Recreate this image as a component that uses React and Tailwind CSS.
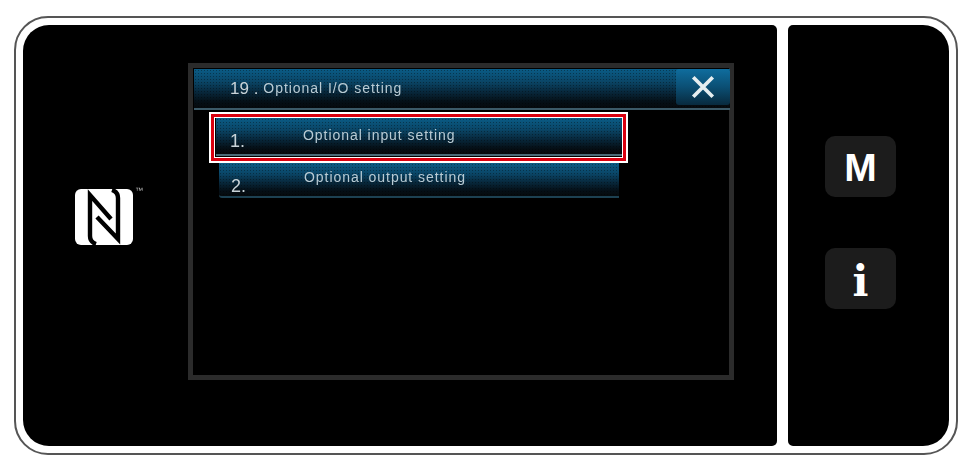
const barGradient = 'bg-[radial-gradient(circle,#00000059_0.7px,transparent_0.9px),linear-gradient(180deg,#0a5c86_0%,#0a4667_32%,#082c42_55%,#050f16_84%,#060a0d_100%)] bg-[length:3px_3px,100%_100%]';
const labelText = 'text-[14px] leading-[16px] tracking-[0.95px] text-[#b9cbd4] blur-[0.5px]';

function NfcLogo() {
  return (
    <div className="relative ml-[52px] mt-[164px] h-[56px] w-[58px] shrink-0 rounded-[6px] bg-white blur-[0.5px]">
      <svg viewBox="0 0 58 56" className="h-full w-full" fill="none" stroke="#000" strokeWidth="4.4">
        <path d="M21 55 Q15 53 15 47 V6 L36 30" />
        <path d="M37 1 Q43 3 43 9 V50 L22 28" />
      </svg>
      <span className="absolute left-[60px] top-[-3px] text-[8px] leading-[10px] text-[#bbb] font-['Liberation_Sans',sans-serif]">™</span>
    </div>
  );
}

function MenuRow({ num, label, className, numClass, labelTop }) {
  return (
    <div className={`flex h-full items-start ${barGradient} ${className}`}>
      <span className={`w-[73px] text-[18px] leading-[20px] text-[#c9d3d8] blur-[0.3px] ${numClass}`}>{num}</span>
      <span className={`${labelText} ${labelTop}`}>{label}</span>
    </div>
  );
}

function Dialog() {
  return (
    <div className="mt-[38px] ml-[55px] h-[317px] w-[546px] shrink-0 border-[5px] border-[#2b2b2b] bg-black pt-px font-['Liberation_Sans',sans-serif]">
      <div className={`ml-px flex h-[41px] w-[536px] items-start border-b-2 border-[#3c5a68] ${barGradient}`}>
        <span className="ml-[36px] mt-[10px] text-[17px] leading-[20px] text-[#c9d3d8] blur-[0.3px]">19 .</span>
        <span className={`ml-[5px] mt-[11px] ${labelText}`}>Optional I/O setting</span>
        <button className="ml-auto flex h-[36px] w-[54px] items-center justify-center rounded-[3px] bg-[linear-gradient(180deg,#0f6d9e_0%,#0b4f74_50%,#082a3e_100%)]">
          <svg viewBox="0 0 24 24" className="h-[26px] w-[26px]" fill="none" stroke="#e6eef0" strokeWidth="3.4">
            <path d="M3 3 L21 21 M21 3 L3 21" />
          </svg>
        </button>
      </div>
      <div className="ml-[16px] mt-[2px] h-[51px] w-[419px] border-2 border-white bg-black">
        <div className="h-full border-[3px] border-[#d9000f] bg-white p-[1px]">
          <div className="h-full bg-black pl-[1px] pb-[1px]">
            <MenuRow num="1." label="Optional input setting" numClass="ml-[14px] mt-[13px]" labelTop="mt-[9px]" className="border-b-2 border-[#4a6a78]" />
          </div>
        </div>
      </div>
      <div className="ml-[26px] h-[35px] w-[400px]">
        <MenuRow num="2." label="Optional output setting" numClass="ml-[12px] mt-[13px]" labelTop="mt-[6px]" className="rounded-bl-[3px] border-b-2 border-[#1d4152]" />
      </div>
    </div>
  );
}

export default function App() {
  return (
    <div className="h-[468px] w-[975px] overflow-hidden bg-white pl-[14px] pt-[16px]">
      <div className="flex h-[439px] w-[944px] gap-[11px] rounded-[34px] border-2 border-[#555] bg-white p-[7px]">
        <div className="flex w-[754px] rounded-l-[26px] rounded-r-[5px] bg-black">
          <NfcLogo />
          <Dialog />
        </div>
        <div className="flex w-[161px] flex-col gap-[51px] rounded-l-[5px] rounded-r-[26px] bg-black pl-[37px] pt-[111px]">
          <button className="flex h-[61px] w-[71px] items-center justify-center rounded-[10px] bg-[#1c1c1c] pt-[3px] font-['Liberation_Sans',sans-serif] text-[39px] font-bold text-white">
            M
          </button>
          <button className="flex h-[61px] w-[71px] items-center justify-center rounded-[10px] bg-[#1c1c1c] pt-[6px] font-['DejaVu_Serif',serif] text-[42px] font-bold text-white">
            i
          </button>
        </div>
      </div>
    </div>
  );
}
